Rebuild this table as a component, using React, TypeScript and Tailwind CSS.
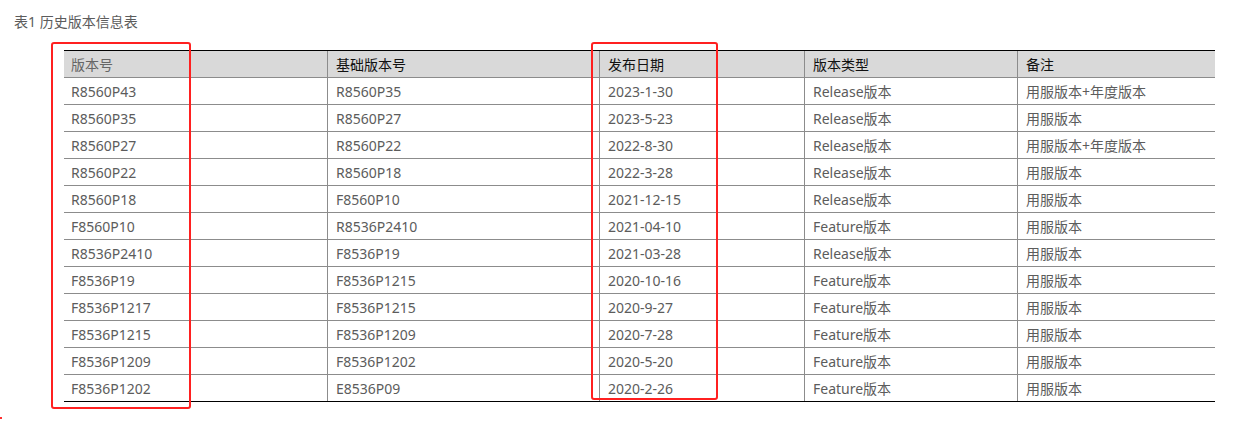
const rows = [
  ["R8560P43", "R8560P35", "2023-1-30", "Release版本", "用服版本+年度版本"],
  ["R8560P35", "R8560P27", "2023-5-23", "Release版本", "用服版本"],
  ["R8560P27", "R8560P22", "2022-8-30", "Release版本", "用服版本+年度版本"],
  ["R8560P22", "R8560P18", "2022-3-28", "Release版本", "用服版本"],
  ["R8560P18", "F8560P10", "2021-12-15", "Release版本", "用服版本"],
  ["F8560P10", "R8536P2410", "2021-04-10", "Feature版本", "用服版本"],
  ["R8536P2410", "F8536P19", "2021-03-28", "Release版本", "用服版本"],
  ["F8536P19", "F8536P1215", "2020-10-16", "Feature版本", "用服版本"],
  ["F8536P1217", "F8536P1215", "2020-9-27", "Feature版本", "用服版本"],
  ["F8536P1215", "F8536P1209", "2020-7-28", "Feature版本", "用服版本"],
  ["F8536P1209", "F8536P1202", "2020-5-20", "Feature版本", "用服版本"],
  ["F8536P1202", "E8536P09", "2020-2-26", "Feature版本", "用服版本"],
];

const headers = ["版本号", "基础版本号", "发布日期", "版本类型", "备注"];
const cols = "grid grid-cols-[263px_272px_205px_213px_198px]";

export default function App() {
  return (
    <div
      className="relative h-[421px] w-[1245px] bg-white text-[#5c5c5c]"
      style={{ fontFamily: '"Noto Sans", "Noto Sans CJK SC", sans-serif' }}
    >
      <div className="pl-[14px] pt-[11px] text-[14px] leading-[21px]">表1 历史版本信息表</div>

      <div className="ml-[64px] mt-[18px] w-[1151px] border-t border-black">
        {/* header */}
        <div className={`${cols} border-b border-[#8c8c8c] bg-[#d9d9d9]`}>
          {headers.map((h, i) => (
            <div
              key={h}
              className={`flex h-[26px] items-center text-[14px] ${
                i === 0 ? "pl-[7px] text-[#666]" : "border-l border-[#8c8c8c] pl-[8px] text-[#111]"
              }`}
            >
              {h}
            </div>
          ))}
        </div>

        {/* body */}
        {rows.map((r, ri) => (
          <div
            key={ri}
            className={`${cols} border-b ${ri === rows.length - 1 ? "border-black" : "border-[#8c8c8c]"}`}
          >
            {r.map((c, i) => (
              <div
                key={i}
                className={`flex h-[26px] items-center text-[14px] ${
                  i === 0 ? "pl-[7px]" : "border-l border-[#8c8c8c] pl-[8px]"
                }`}
              >
                {c}
              </div>
            ))}
          </div>
        ))}
      </div>

      {/* red highlight boxes */}
      <div className="absolute left-[51px] top-[42px] h-[367px] w-[140px] rounded-[3px] border-2 border-[#ff2020]" />
      <div className="absolute left-[591px] top-[42px] h-[358px] w-[127px] rounded-[3px] border-2 border-[#ff2020]" />

      <div className="absolute left-0 top-[417px] h-[2px] w-[2px] bg-[#ff3030]" />
    </div>
  );
}
